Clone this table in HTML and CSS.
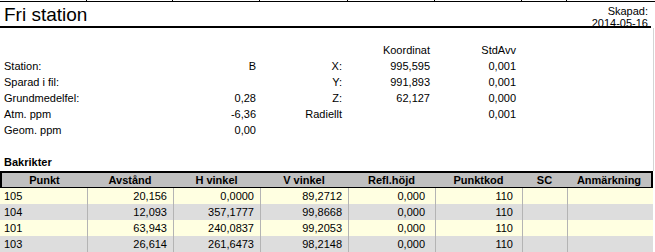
FILE: index.html
```html
<!DOCTYPE html>
<html lang="sv">
<head>
<meta charset="utf-8">
<title>Fri station</title>
<link rel="stylesheet" href="styles.css">
</head>
<body>
<div class="page">
  <div class="strip">
    <span></span><span></span><span></span><span></span><span></span><span></span><span></span><span></span>
  </div>
  <header class="titlebar">
    <h1 class="title">Fri station</h1>
    <div class="created">
      <div>Skapad:</div>
      <div>2014-05-16</div>
    </div>
  </header>
  <div class="sheet">
    <section class="info">
      <div class="info-row">
        <div class="c1"></div><div class="c3"></div><div class="c4"></div>
        <div class="c5">Koordinat</div><div class="c6">StdAvv</div>
      </div>
      <div class="info-row">
        <div class="c1">Station:</div><div class="c3">B</div><div class="c4">X:</div>
        <div class="c5">995,595</div><div class="c6">0,001</div>
      </div>
      <div class="info-row">
        <div class="c1">Sparad i fil:</div><div class="c3"></div><div class="c4">Y:</div>
        <div class="c5">991,893</div><div class="c6">0,001</div>
      </div>
      <div class="info-row">
        <div class="c1">Grundmedelfel:</div><div class="c3">0,28</div><div class="c4">Z:</div>
        <div class="c5">62,127</div><div class="c6">0,000</div>
      </div>
      <div class="info-row">
        <div class="c1">Atm. ppm</div><div class="c3">-6,36</div><div class="c4">Radiellt</div>
        <div class="c5"></div><div class="c6">0,001</div>
      </div>
      <div class="info-row">
        <div class="c1">Geom. ppm</div><div class="c3">0,00</div><div class="c4"></div>
        <div class="c5"></div><div class="c6"></div>
      </div>
    </section>
    <h2 class="section-title">Bakrikter</h2>
  </div>
  <div class="grid-table">
    <div class="row head">
      <div>Punkt</div><div>Avstånd</div><div>H vinkel</div><div>V vinkel</div><div>Refl.höjd</div><div>Punktkod</div><div>SC</div><div>Anmärkning</div>
    </div>
    <div class="row odd">
      <div class="l">105</div><div>20,156</div><div>0,0000</div><div>89,2712</div><div class="p10">0,000</div><div class="p9">110</div><div></div><div></div>
    </div>
    <div class="row even">
      <div class="l">104</div><div>12,093</div><div>357,1777</div><div>99,8668</div><div class="p10">0,000</div><div class="p9">110</div><div></div><div></div>
    </div>
    <div class="row odd">
      <div class="l">101</div><div>63,943</div><div>240,0837</div><div>99,2053</div><div class="p10">0,000</div><div class="p9">110</div><div></div><div></div>
    </div>
    <div class="row even">
      <div class="l">103</div><div>26,614</div><div>261,6473</div><div>98,2148</div><div class="p10">0,000</div><div class="p9">110</div><div></div><div></div>
    </div>
  </div>
</div>
</body>
</html>
```

FILE: styles.css
```css
html, body {
  margin: 0;
  padding: 0;
  background: #ffffff;
}

body {
  font-family: "Liberation Sans", Arial, sans-serif;
  font-size: 11px;
  color: #000000;
  width: 655px;
  height: 252px;
  overflow: hidden;
}

.page {
  width: 655px;
}

.strip {
  display: grid;
  grid-template-columns: 87px 86px 87px 88px 87px 87px 45px 88px;
  border-bottom: 1px solid #000000;
  height: 1px;
}

.strip span {
  border-right: 1px solid #000000;
  height: 1px;
}

.strip span:last-child {
  border-right: none;
}

.titlebar {
  display: flex;
  justify-content: space-between;
  align-items: flex-start;
  width: 651px;
  height: 24px;
  border-bottom: 2px solid #000000;
}

.title {
  margin: 0;
  padding: 3px 0 0 4px;
  font-size: 19px;
  font-weight: normal;
  line-height: 20px;
}

.created {
  padding: 3px 3px 0 0;
  text-align: right;
  line-height: 12px;
}

.sheet {
  width: 653px;
  border-right: 1px solid #d4d4d4;
  padding-top: 14px;
}

.info {
  margin-bottom: 16px;
}

.info-row {
  display: grid;
  grid-template-columns: 173px 87px 88px 87px 87px;
  height: 16px;
  line-height: 16px;
}

.info-row .c1 { padding-left: 4px; }
.info-row .c3 { text-align: right; padding-right: 4px; }
.info-row .c4 { text-align: right; padding-right: 6px; }
.info-row .c5 { text-align: right; padding-right: 5px; }
.info-row .c6 { text-align: right; padding-right: 6px; }

.section-title {
  margin: 0;
  padding-left: 4px;
  font-size: 11px;
  font-weight: bold;
  line-height: 16px;
  height: 17px;
}

.grid-table {
  width: 653px;
}

.row {
  display: grid;
  grid-template-columns: 87px 86px 87px 88px 87px 87px 45px 86px;
}

.row.head {
  box-sizing: border-box;
  height: 17px;
  background: #c0c0c0;
  border: 2px solid #000000;
  border-bottom-width: 1px;
  grid-template-columns: 85px 86px 87px 88px 87px 87px 45px 84px;
  font-weight: bold;
  line-height: 14px;
  text-align: center;
}

.row.odd { background: #ffffe1; }
.row.even { background: #dddddd; }

.row.odd > div,
.row.even > div {
  height: 16px;
  line-height: 16px;
  text-align: right;
  padding-right: 6px;
  border-left: 1px solid #b4b4b4;
}

.row.odd > div.l,
.row.even > div.l {
  text-align: left;
  padding-left: 4px;
  padding-right: 0;
  border-left: none;
}

.row > div.p10 { padding-right: 10px; }
.row > div.p9 { padding-right: 9px; }
```
